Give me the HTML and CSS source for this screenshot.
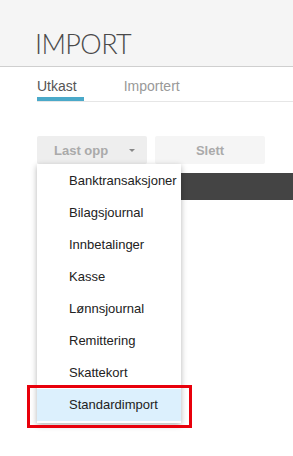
FILE: index.html
```html
<!DOCTYPE html>
<html lang="no">
<head>
    <meta charset="UTF-8">
    <meta name="viewport" content="width=device-width, initial-scale=1.0">
    <title>Import</title>
    <link rel="stylesheet" href="styles.css">
</head>
<body>
    <div class="page-header">
        <h1>IMPORT</h1>
    </div>

    <div class="tabs">
        <div class="tab active">Utkast</div>
        <div class="tab">Importert</div>
    </div>

    <div class="toolbar">
        <div class="upload-wrap">
            <button class="tool-button upload">
                <span>Last opp</span>
                <span class="caret"></span>
            </button>
            <ul class="dropdown">
                <li>Banktransaksjoner</li>
                <li>Bilagsjournal</li>
                <li>Innbetalinger</li>
                <li>Kasse</li>
                <li>Lønnsjournal</li>
                <li>Remittering</li>
                <li>Skattekort</li>
                <li class="selected">Standardimport<span class="highlight-box"></span></li>
            </ul>
        </div>
        <button class="tool-button delete">Slett</button>
    </div>

    <div class="table-head"></div>
</body>
</html>
```

FILE: styles.css
```css
* { margin: 0; padding: 0; box-sizing: border-box; }
body { font-family: 'Liberation Sans', Arial, sans-serif; background: white; color: #222; width: 293px; height: 456px; overflow: hidden; }
.page-header { background: #f5f5f5; height: 67px; border-bottom: 1px solid #cfcfcf; padding: 28px 0 0 35px; }
.page-header h1 { font-family: 'Lato', sans-serif; font-weight: 300; font-size: 27px; line-height: 32px; color: #4a4a4a; letter-spacing: -0.6px; }
.tabs { display: flex; gap: 40px; margin-left: 37px; padding-top: 9px; border-bottom: 1px solid #e6e6e6; }
.tab { font-size: 14px; line-height: 20px; padding: 0 7px 1px 0; border-bottom: 4px solid transparent; color: #999; }
.tab.active { color: #555; border-bottom-color: #4aa9c9; }
.toolbar { display: flex; gap: 8px; margin: 34px 0 0 37px; }
.upload-wrap { position: relative; }
.tool-button { width: 110px; height: 28px; border: none; border-radius: 2px; font-family: 'Liberation Sans', Arial, sans-serif; font-size: 13px; font-weight: 700; color: #aaa; display: flex; align-items: center; justify-content: center; }
.upload { background: #eeeeee; justify-content: flex-start; padding-left: 17px; }
.upload .caret { width: 0; height: 0; border-left: 3px solid transparent; border-right: 3px solid transparent; border-top: 3px solid #888; margin-left: auto; margin-right: 12px; }
.delete { background: #f5f5f5; }
.dropdown { position: absolute; top: 28px; left: 0; width: 144px; background: white; list-style: none; padding: 1px 0 2px; box-shadow: 0 2px 6px rgba(0, 0, 0, 0.3); z-index: 2; }
.dropdown li { position: relative; height: 32px; line-height: 32px; padding-left: 32px; font-size: 13px; color: #222; }
.dropdown li.selected { background: #dcf0fd; }
.highlight-box { position: absolute; left: -10px; top: -4px; width: 165px; height: 43px; border: 3px solid #e8000b; }
.table-head { height: 27px; background: #444; margin: 9px 0 0 37px; }
```
